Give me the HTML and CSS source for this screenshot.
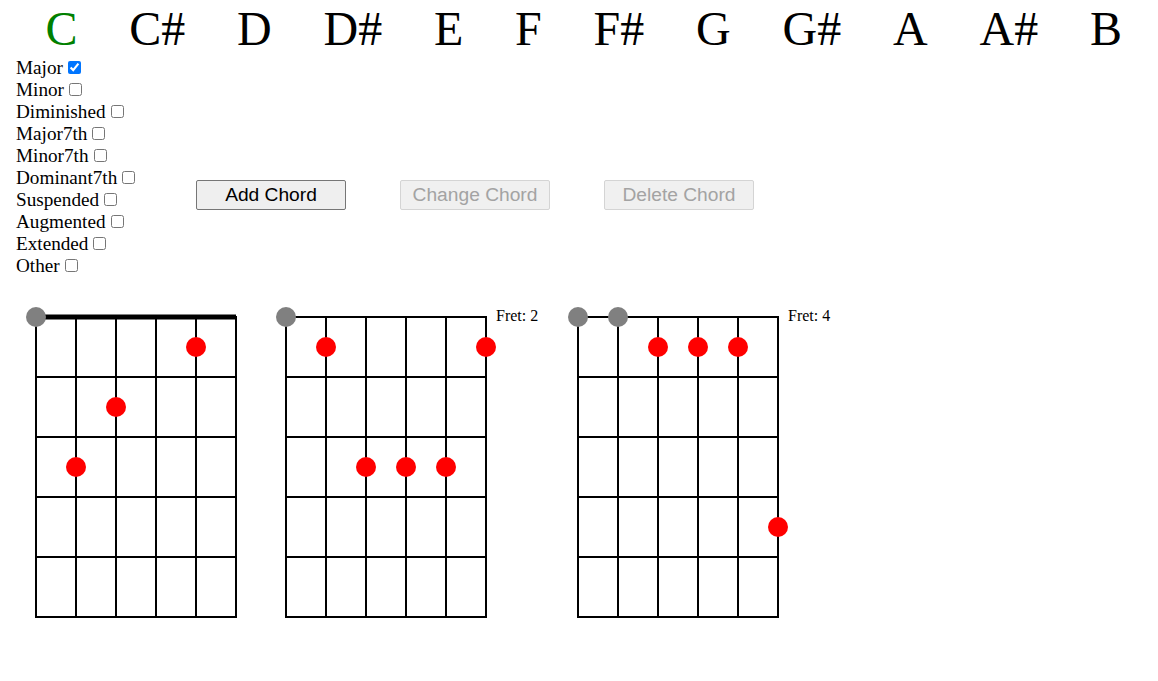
FILE: index.html
```html
<!DOCTYPE html>
<html>
<head>
<meta charset="utf-8">
<link rel="stylesheet" href="styles.css">
</head>
<body>
<div class="page">
  <div class="notes">
    <span class="note active">C</span>
    <span class="note">C#</span>
    <span class="note">D</span>
    <span class="note">D#</span>
    <span class="note">E</span>
    <span class="note">F</span>
    <span class="note">F#</span>
    <span class="note">G</span>
    <span class="note">G#</span>
    <span class="note">A</span>
    <span class="note">A#</span>
    <span class="note">B</span>
  </div>
  <div class="controls">
    <div class="types">
      <label class="type">Major<input type="checkbox" checked></label>
      <label class="type">Minor<input type="checkbox"></label>
      <label class="type">Diminished<input type="checkbox"></label>
      <label class="type">Major7th<input type="checkbox"></label>
      <label class="type">Minor7th<input type="checkbox"></label>
      <label class="type">Dominant7th<input type="checkbox"></label>
      <label class="type">Suspended<input type="checkbox"></label>
      <label class="type">Augmented<input type="checkbox"></label>
      <label class="type">Extended<input type="checkbox"></label>
      <label class="type">Other<input type="checkbox"></label>
    </div>
    <div class="actions">
      <button class="btn">Add Chord</button>
      <button class="btn" disabled>Change Chord</button>
      <button class="btn" disabled>Delete Chord</button>
    </div>
  </div>
  <div class="charts">
    <svg class="chart chart-a" width="250" height="330" viewBox="0 0 250 330">
      <g class="grid">
        <line x1="20" y1="20" x2="20" y2="320"/>
        <line x1="60" y1="20" x2="60" y2="320"/>
        <line x1="100" y1="20" x2="100" y2="320"/>
        <line x1="140" y1="20" x2="140" y2="320"/>
        <line x1="180" y1="20" x2="180" y2="320"/>
        <line x1="220" y1="20" x2="220" y2="320"/>
        <line x1="20" y1="20" x2="220" y2="20"/>
        <line x1="20" y1="80" x2="220" y2="80"/>
        <line x1="20" y1="140" x2="220" y2="140"/>
        <line x1="20" y1="200" x2="220" y2="200"/>
        <line x1="20" y1="260" x2="220" y2="260"/>
        <line x1="20" y1="320" x2="220" y2="320"/>
      </g>
      <line class="nut" x1="20" y1="20" x2="220" y2="20"/>
      <circle class="open" cx="20" cy="20" r="10"/>
      <circle class="dot" cx="180" cy="50" r="10"/>
      <circle class="dot" cx="100" cy="110" r="10"/>
      <circle class="dot" cx="60" cy="170" r="10"/>
    </svg>
    <svg class="chart chart-b" width="292" height="330" viewBox="0 0 292 330">
      <g class="grid">
        <line x1="20" y1="20" x2="20" y2="320"/>
        <line x1="60" y1="20" x2="60" y2="320"/>
        <line x1="100" y1="20" x2="100" y2="320"/>
        <line x1="140" y1="20" x2="140" y2="320"/>
        <line x1="180" y1="20" x2="180" y2="320"/>
        <line x1="220" y1="20" x2="220" y2="320"/>
        <line x1="20" y1="20" x2="220" y2="20"/>
        <line x1="20" y1="80" x2="220" y2="80"/>
        <line x1="20" y1="140" x2="220" y2="140"/>
        <line x1="20" y1="200" x2="220" y2="200"/>
        <line x1="20" y1="260" x2="220" y2="260"/>
        <line x1="20" y1="320" x2="220" y2="320"/>
      </g>
      <text class="fret" x="230" y="24">Fret: 2</text>
      <circle class="open" cx="20" cy="20" r="10"/>
      <circle class="dot" cx="60" cy="50" r="10"/>
      <circle class="dot" cx="220" cy="50" r="10"/>
      <circle class="dot" cx="100" cy="170" r="10"/>
      <circle class="dot" cx="140" cy="170" r="10"/>
      <circle class="dot" cx="180" cy="170" r="10"/>
    </svg>
    <svg class="chart chart-c" width="292" height="330" viewBox="0 0 292 330">
      <g class="grid">
        <line x1="20" y1="20" x2="20" y2="320"/>
        <line x1="60" y1="20" x2="60" y2="320"/>
        <line x1="100" y1="20" x2="100" y2="320"/>
        <line x1="140" y1="20" x2="140" y2="320"/>
        <line x1="180" y1="20" x2="180" y2="320"/>
        <line x1="220" y1="20" x2="220" y2="320"/>
        <line x1="20" y1="20" x2="220" y2="20"/>
        <line x1="20" y1="80" x2="220" y2="80"/>
        <line x1="20" y1="140" x2="220" y2="140"/>
        <line x1="20" y1="200" x2="220" y2="200"/>
        <line x1="20" y1="260" x2="220" y2="260"/>
        <line x1="20" y1="320" x2="220" y2="320"/>
      </g>
      <text class="fret" x="230" y="24">Fret: 4</text>
      <circle class="open" cx="20" cy="20" r="10"/>
      <circle class="open" cx="60" cy="20" r="10"/>
      <circle class="dot" cx="100" cy="50" r="10"/>
      <circle class="dot" cx="140" cy="50" r="10"/>
      <circle class="dot" cx="180" cy="50" r="10"/>
      <circle class="dot" cx="220" cy="230" r="10"/>
    </svg>
  </div>
</div>
</body>
</html>
```
FILE: styles.css
```css
html, body {
  margin: 0;
  padding: 0;
  background: #ffffff;
}

body {
  font-family: "Liberation Serif", "Times New Roman", serif;
  font-size: 19.2px;
  color: #000000;
}

.page {
  padding: 1px 0 0 16px;
}

.notes {
  display: flex;
  gap: 51.8px;
  padding-left: 29.4px;
  font-size: 48px;
  line-height: 55.5px;
  height: 56px;
}

.note {
  color: #000000;
}

.note.active {
  color: #008000;
}

.controls {
  display: flex;
  align-items: flex-start;
}

.types {
  flex: 0 0 180px;
  display: flex;
  flex-direction: column;
}

.type {
  display: block;
  height: 22px;
  line-height: 22px;
  white-space: nowrap;
}

.type input {
  margin: 4px 3px 2px 5px;
  width: 13px;
  height: 13px;
  vertical-align: baseline;
}

.actions {
  display: flex;
  gap: 54px;
  margin-top: 123px;
}

.btn {
  width: 150px;
  height: 30px;
  padding: 0;
  font-family: "Liberation Sans", Arial, sans-serif;
  font-size: 19.2px;
  color: #000000;
  background: #efefef;
  border: 1px solid #767676;
  border-radius: 2px;
}

.btn:disabled {
  color: #a3a3a3;
  background: #f0f0f0;
  border-color: #d4d4d4;
}

.charts {
  display: flex;
  margin-top: 20px;
}

.chart {
  display: block;
  flex: 0 0 auto;
}

.grid line {
  stroke: #000000;
  stroke-width: 2;
  stroke-linecap: square;
}

.nut {
  stroke: #000000;
  stroke-width: 5;
}

.open {
  fill: #808080;
}

.dot {
  fill: #ff0000;
}

.fret {
  font-family: "Liberation Serif", "Times New Roman", serif;
  font-size: 16px;
  fill: #000000;
}
```
